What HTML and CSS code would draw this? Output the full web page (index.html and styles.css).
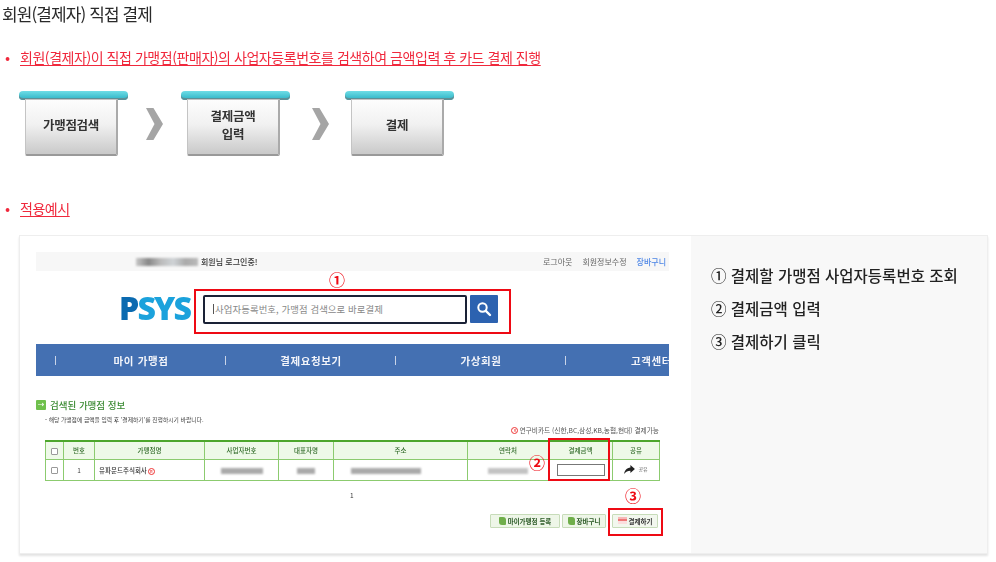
FILE: index.html
```html
<!DOCTYPE html>
<html lang="ko">
<head>
<meta charset="utf-8">
<title>회원(결제자) 직접 결제</title>
<link rel="stylesheet" href="styles.css">
</head>
<body>
<h1 class="page-title">회원(결제자) 직접 결제</h1>
<p class="bullet bullet-first"><span class="dot">•</span><u>회원(결제자)이 직접 가맹점(판매자)의 사업자등록번호를 검색하여 금액입력 후 카드 결제 진행</u></p>

<div class="steps">
  <div class="step"><div class="step-bar"></div><div class="step-box">가맹점검색</div></div>
  <svg class="chev" viewBox="0 0 16 30"><path d="M0 0h7l9 15-9 15H0l8-15z"/></svg>
  <div class="step"><div class="step-bar"></div><div class="step-box">결제금액<br>입력</div></div>
  <svg class="chev chev-b" viewBox="0 0 16 30"><path d="M0 0h7l9 15-9 15H0l8-15z"/></svg>
  <div class="step"><div class="step-bar"></div><div class="step-box">결제</div></div>
</div>

<p class="bullet bullet-second"><span class="dot">•</span><u>적용예시</u></p>

<section class="card">
  <div class="shot">
    <div class="topbar">
      <div class="member"><span class="smear"></span><span>회원님 로그인중!</span></div>
      <div class="toplinks"><span>로그아웃</span><span>회원정보수정</span><span class="cart">장바구니</span></div>
    </div>
    <div class="searchrow">
      <div class="logo"><span class="logo-p">P</span><span class="logo-s">SYS</span></div>
      <div class="searchgroup">
        <div class="searchinput">사업자등록번호, 가맹점 검색으로 바로결제</div>
        <div class="searchbtn"><svg viewBox="0 0 16 16" width="16" height="16"><circle cx="6.500" cy="6.500" r="4.200" fill="none" stroke="#fff" stroke-width="2"/><path d="M9.800 9.800l4.200 4.200" stroke="#fff" stroke-width="2.400" stroke-linecap="round"/></svg></div>
        <span class="mark mark-1">①</span>
      </div>
    </div>
    <nav class="nav">
      <span class="nav-i n1">마이 가맹점</span>
      <span class="nav-i n2">결제요청보기</span>
      <span class="nav-i n3">가상회원</span>
      <span class="nav-i n4">고객센터</span>
    </nav>
    <div class="sec-title"><span class="sec-icon">→</span>검색된 가맹점 정보</div>
    <p class="sec-note">- 해당 가맹점에 금액을 입력 후 '결제하기'를 진행하시기 바랍니다.</p>
    <p class="card-note"><span class="r-icon">R</span>연구비카드 (신한,BC,삼성,KB,농협,현대) 결제가능</p>
    <div class="tablewrap">
      <table class="tbl">
        <colgroup><col class="c1"><col class="c2"><col class="c3"><col class="c4"><col class="c5"><col class="c6"><col class="c7"><col class="c8"><col class="c9"></colgroup>
        <thead>
          <tr><th><span class="check"></span></th><th>번호</th><th>가맹점명</th><th>사업자번호</th><th>대표자명</th><th>주소</th><th>연락처</th><th>결제금액</th><th>공유</th></tr>
        </thead>
        <tbody>
          <tr>
            <td><span class="check"></span></td><td>1</td>
            <td class="left">유파운드주식회사<span class="r-icon">R</span></td>
            <td><span class="smudge s1"></span></td><td><span class="smudge s2"></span></td><td><span class="smudge s3"></span></td><td><span class="smudge s4"></span></td>
            <td><span class="amount"></span></td>
            <td class="share"><svg viewBox="0 0 12 10" width="11" height="9"><path d="M7 0l5 4.500L7 9V6.300C4 6.300 2 7.500 0 10c.5-4 3-6.800 7-7.300z" fill="#222"/></svg><span>공유</span></td>
          </tr>
        </tbody>
      </table>
      <span class="redbox box-amount"></span>
      <span class="mark mark-2">②</span>
    </div>
    <div class="pager">1</div>
    <div class="actions">
      <span class="act act-a"><i class="leafico"></i>마이가맹점 등록</span>
      <span class="act act-b"><i class="leafico"></i>장바구니</span>
      <span class="act act-c"><i class="cardico"></i>결제하기</span>
      <span class="mark mark-3">③</span>
    </div>
  </div>
  <aside class="guide">
    <p>① 결제할 가맹점 사업자등록번호 조회</p>
    <p>② 결제금액 입력</p>
    <p>③ 결제하기 클릭</p>
  </aside>
</section>
</body>
</html>
```

FILE: styles.css
```css
* { box-sizing: border-box; }
html, body { margin: 0; padding: 0; background: #fff; }
body {
  width: 996px; height: 562px; overflow: hidden; position: relative;
  font-family: "Noto Sans CJK KR", "Noto Sans", sans-serif; color: #222;
}
.page-title {
  margin: 0; padding: 3px 0 0 2px; height: 24px;
  font-size: 17px; line-height: 21px; font-weight: 400; letter-spacing: -.9px; color: #2a2a2a; filter: blur(.3px);
}
.bullet { margin: 0; font-size: 14px; line-height: 20px; color: #f0283c; letter-spacing: -.45px; display: flex; filter: blur(.25px); }
.bullet u { text-underline-offset: 2px; text-decoration-thickness: 1px; }
.dot { width: 20px; padding-left: 5px; font-size: 15px; }
.bullet-first { margin-top: 23px; }
.bullet-second { margin-top: 41px; }

.steps { display: flex; align-items: flex-start; margin: 24px 0 0 19px; height: 66px; }
.step { width: 109px; flex: none; }
.step-bar { height: 9px; background: linear-gradient(#6fdde6, #2bb2c4); border-radius: 4px; box-shadow: inset 0 -2px 0 #5e8f96; }
.step-box {
  width: 93px; height: 57px; margin: -1px 0 0 6px; padding-bottom: 4px;
  background: linear-gradient(#fdfdfd 0, #f1f1f1 45%, #c9c9c9 100%);
  border: 1px solid #c4c4c4; border-bottom: 2px solid #999; border-right: 2px solid #aaa; border-radius: 0 0 2px 2px;
  display: flex; align-items: center; justify-content: center; text-align: center;
  font-size: 12.500px; line-height: 18px; font-weight: 700; color: #333; letter-spacing: -.3px; filter: blur(.25px);
}
.chev { flex: none; width: 17px; height: 32px; margin: 17px 18px 0 18px; fill: #a5a5a5; }
.chev-b { margin: 17px 16px 0 22px; }

.card {
  display: flex; margin: 17px 0 0 19px; width: 969px; height: 319px;
  background: #fff; border: 1px solid #eee; box-shadow: 0 2px 2px #e4e4e4;
}
.shot { width: 671px; padding: 16px 0 0 16px; position: relative; filter: blur(.35px); }
.guide {
  flex: 1; background: #f8f8f8; padding: 28px 0 0 20px;
  font-size: 15.500px; font-weight: 500; color: #222; letter-spacing: 0; filter: blur(.25px);
}
.guide p { margin: 0 0 11px; line-height: 22px; white-space: nowrap; }

.topbar {
  width: 633px; height: 19px; background: #f7f7f7; display: flex; justify-content: space-between; align-items: center;
  font-size: 8px; color: #444;
}
.member { display: flex; align-items: center; margin-left: 100px; font-weight: 500; color: #333; }
.smear { width: 62px; height: 8px; margin-right: 3px; background: linear-gradient(90deg,#c8c8c8,#888 20%,#bbb 40%,#cfd3d6 60%,#aaa 80%,#bbb); filter: blur(1px); }
.toplinks { display: flex; gap: 10px; margin-right: 3px; color: #666; }
.cart { color: #4d86e6; font-weight: 500; }

.searchrow { display: flex; align-items: flex-start; margin: 24px 0 0 85px; height: 49px; }
.logo { font-family: "Open Sans", sans-serif; font-weight: 800; font-size: 32px; line-height: 26px; letter-spacing: -1.800px; width: 82px; height: 26px; margin-left: -2px; flex: none; }
.logo-p { color: #0a6ab0; }
.logo-s { color: #1ba2dc; }
.searchgroup { position: relative; display: flex; gap: 3px; margin-left: 2px; }
.searchgroup::before {
  content: ""; position: absolute; left: -9px; top: -6px; width: 313px; height: 41px; border: 2px solid #ee0a14;
}
.searchinput {
  width: 264px; height: 29px; border: 2px solid #1a2236; border-radius: 2px; background: #fff;
  padding-left: 8px; font-size: 9.400px; line-height: 25px; color: #888; letter-spacing: .1px;
  border-image: none;
}
.searchinput::before { content: ""; display: inline-block; width: 1px; height: 10px; background: #555; margin-right: 1px; vertical-align: -1px; }
.searchbtn { width: 28px; height: 28px; background: #2c62b0; border-radius: 1px; display: flex; align-items: center; justify-content: center; }
.mark { position: absolute; font-size: 16px; line-height: 16px; font-weight: 700; color: #ee0a14; }
.mark-1 { left: 126px; top: -24px; }

.nav { position: relative; width: 633px; height: 32px; background: #4470b2; color: #f2f4fa; font-size: 10.500px; font-weight: 700; letter-spacing: .6px; overflow: hidden; display: flex; align-items: center; }
.nav-i { flex: none; position: relative; width: 170px; text-align: center; white-space: nowrap; }
.nav-i::before { content: ""; position: absolute; left: -1px; top: 3px; width: 1px; height: 9px; background: #c9d4e8; }
.n1 { margin-left: 20px; }
.n4 { text-align: left; padding-left: 65px; }

.sec-title { display: flex; align-items: center; margin-top: 22px; font-size: 9.500px; line-height: 14px; font-weight: 500; color: #3a8a32; }
.sec-icon { width: 10px; height: 10px; background: #6fc04c; color: #fff; font-size: 8px; line-height: 10px; text-align: center; margin-right: 4px; border-radius: 1px; font-family: "DejaVu Sans", sans-serif; }
.sec-note { margin: 3px 0 0 9px; font-size: 5.800px; line-height: 9px; color: #444; }
.card-note { margin: 1px 0 0; width: 623px; height: 11px; display: flex; justify-content: flex-end; align-items: center; font-size: 6.700px; line-height: 9px; color: #555; }
.r-icon { display: inline-block; width: 7px; height: 7px; margin: 0 1px; border-radius: 50%; background: #fff; border: 1px solid #e33; color: #e33; font-size: 4px; line-height: 5px; text-align: center; }

.tablewrap { position: relative; margin: 4px 0 0 9px; width: 614px; }
.tbl { border-collapse: collapse; table-layout: fixed; width: 614px; font-size: 6.500px; color: #444; }
.tbl th, .tbl td { border: 1px solid #8ccb6f; padding: 0; text-align: center; }
.tbl thead tr { height: 18px; }
.tbl tbody tr { height: 21px; }
.tbl thead th { background: #eef9e8; font-weight: 500; color: #2f6a27; border-top: 2px solid #4da62c; }
.tbl .left { text-align: left; padding-left: 4px; font-weight: 500; color: #333; }
.c1 { width: 18px; } .c2 { width: 31px; } .c3 { width: 110px; } .c4 { width: 74px; } .c5 { width: 55px; } .c6 { width: 134px; } .c7 { width: 81px; } .c8 { width: 64px; } .c9 { width: 47px; }
.check { display: inline-block; width: 7px; height: 7px; border: 1px solid #999; border-radius: 1px; background: #fff; vertical-align: middle; }
.smudge { display: inline-block; height: 6px; vertical-align: middle; background: #aaa; filter: blur(1.200px); }
.s1 { width: 42px; } .s2 { width: 18px; } .s3 { width: 70px; margin-right: 30px; } .s4 { width: 40px; opacity: .7; }
.amount { display: inline-block; width: 48px; height: 12px; border: 1px solid #777; background: #fff; vertical-align: middle; }
.share { font-size: 5px; color: #555; white-space: nowrap; }
.share svg { vertical-align: middle; margin-right: 3px; }
.redbox { position: absolute; border: 2px solid #ee0a14; }
.box-amount { left: 503px; top: -2px; width: 62px; height: 43px; }
.mark-2 { left: 484px; top: 14px; }

.pager { margin: 7px 0 0 314px; font-size: 6.500px; line-height: 15px; color: #333; height: 26px; }
.actions { position: relative; margin-left: 454px; display: flex; gap: 2px; height: 15px; font-size: 6.500px; font-weight: 700; color: #2b5a26; }
.act { display: flex; align-items: center; justify-content: center; height: 14px; background: #eef6e8; border: 1px solid #c7dcb9; border-radius: 1px; white-space: nowrap; }
.act-a { width: 70px; }
.act-b { width: 44px; }
.act-c { width: 46px; margin-left: 4px; color: #333; background: #f2f7ee; }
.act-c::after { content: ""; position: absolute; left: 118px; top: -6px; width: 51px; height: 24px; border: 2px solid #ee0a14; }
.leafico { display: inline-block; width: 7px; height: 8px; margin-right: 2px; background: #6fae4a; border-radius: 1px 3px 1px 3px; }
.cardico { display: inline-block; width: 9px; height: 7px; margin-right: 2px; background: linear-gradient(#f7b9b9 0 30%, #e77 30% 60%, #fbdede 60%); }
.mark-3 { left: 135px; top: -27px; }
```
